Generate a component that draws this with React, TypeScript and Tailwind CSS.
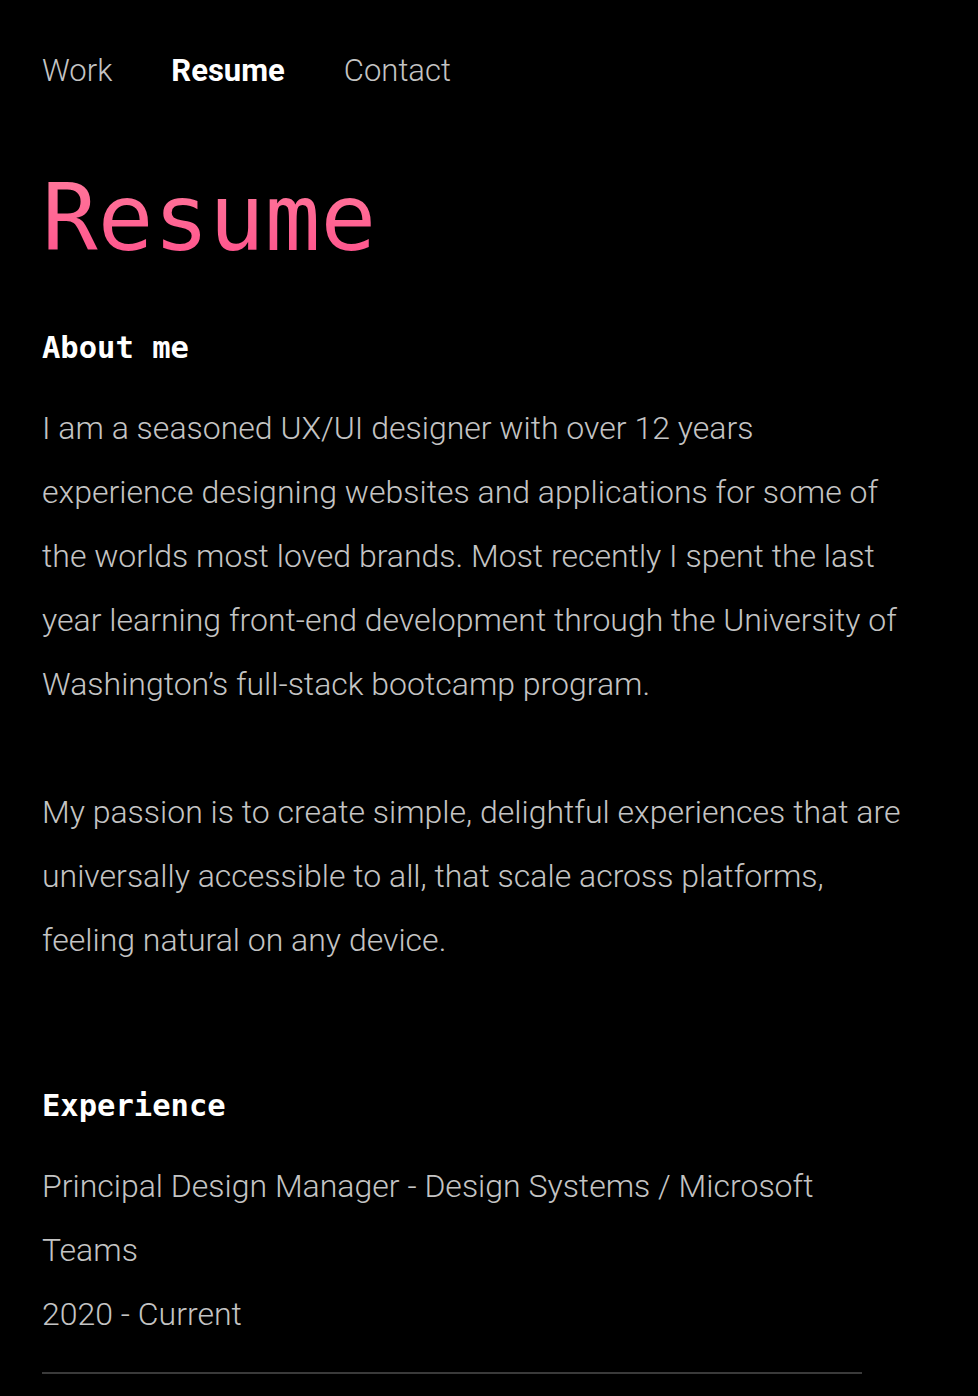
import React from "react"

const navItems = [
  { label: "Work", active: false },
  { label: "Resume", active: true },
  { label: "Contact", active: false },
]

const about = [
  "I am a seasoned UX/UI designer with over 12 years experience designing websites and applications for some of the worlds most loved brands. Most recently I spent the last year learning front-end development through the University of Washington’s full-stack bootcamp program.",
  "My passion is to create simple, delightful experiences that are universally accessible to all, that scale across platforms, feeling natural on any device.",
]

export default function App() {
  return (
    <div className="min-h-screen bg-black px-[42px] pt-[49px] font-['Roboto',sans-serif]">
      {/* nav */}
      <nav className="flex gap-[59px] text-[31px] leading-[44px]">
        {navItems.map((item) => (
          <a
            key={item.label}
            href="#"
            className={item.active ? "font-bold text-white" : "font-light text-[#c4c4c4]"}
          >
            {item.label}
          </a>
        ))}
      </nav>

      <h1 className="mt-[70px] bg-gradient-to-b from-[#ff7c9d] to-[#ff4c8a] bg-clip-text font-['DejaVu_Sans_Mono',monospace] text-[92.5px] leading-[110px] text-transparent">
        Resume
      </h1>

      <section className="mt-[55px] max-w-[862px]">
        <h2 className="font-['DejaVu_Sans_Mono',monospace] text-[30.5px] font-bold leading-[40px] text-white">
          About me
        </h2>
        <div className="mt-[28px] space-y-[64px]">
          {about.map((p, i) => (
            <p key={i} className="text-[32px] font-light leading-[64px] text-[#c4c4c4]">
              {p}
            </p>
          ))}
        </div>
      </section>

      <section className="mt-[114px]">
        <h2 className="font-['DejaVu_Sans_Mono',monospace] text-[30.5px] font-bold leading-[40px] text-white">
          Experience
        </h2>
        <div className="mt-[28px] max-w-[820px] border-b-2 border-[#3a3a3a] pb-[26px]">
          <p className="text-[32px] font-light leading-[64px] text-[#c4c4c4]">
            Principal Design Manager - Design Systems / Microsoft Teams
          </p>
          <p className="text-[32px] font-light leading-[64px] text-[#c4c4c4]">2020 - Current</p>
        </div>
      </section>
    </div>
  )
}
